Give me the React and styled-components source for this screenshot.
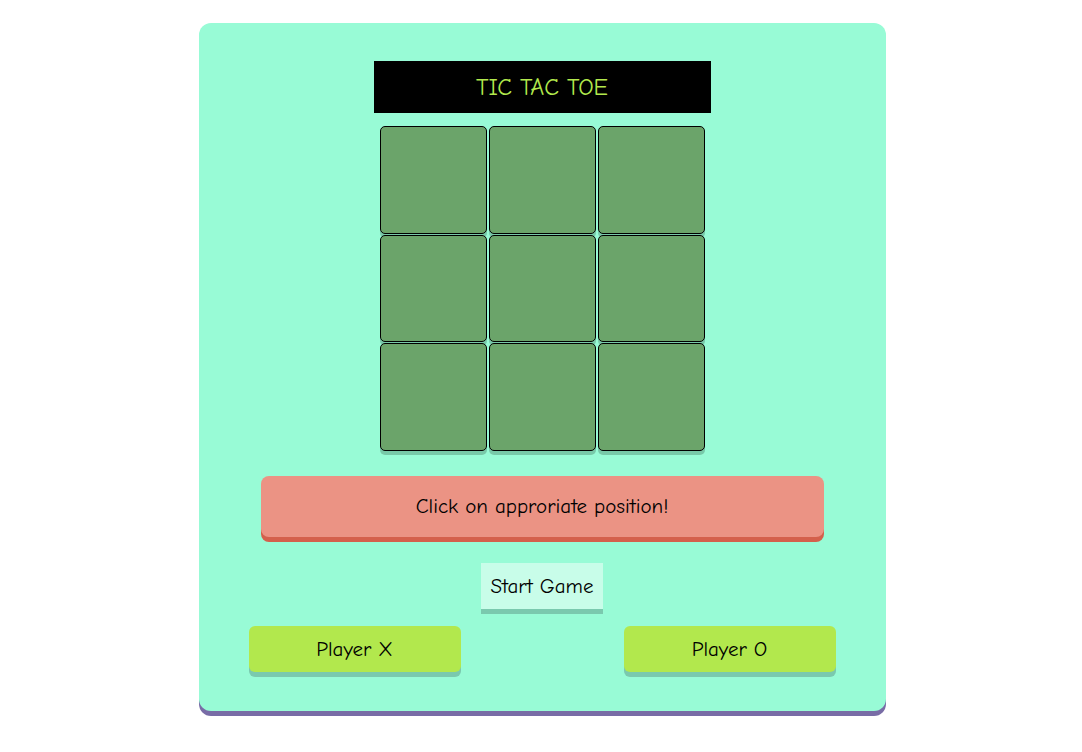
import React from "react";
import styled, { createGlobalStyle } from "styled-components";

const GlobalStyle = createGlobalStyle`
  body {
    margin: 0;
    background: #ffffff;
    font-family: "Comic Sans MS", "Comic Neue", cursive;
  }
`;

const Page = styled.div`
  display: flex;
  justify-content: center;
  align-items: flex-start;
  padding: 23px 0 36px 2px;
`;

const Card = styled.div`
  width: 687px;
  box-sizing: border-box;
  padding: 38px 50px 39px;
  background: #98fbd6;
  border-radius: 12px;
  box-shadow: 0 5px 0 #786ca6;
  display: flex;
  flex-direction: column;
  align-items: center;
`;

const Title = styled.div`
  width: 337px;
  height: 52px;
  background: #000000;
  color: #b2e84d;
  font-size: 24px;
  display: flex;
  align-items: center;
  justify-content: center;
`;

const Board = styled.div`
  margin-top: 13px;
  display: grid;
  grid-template-columns: repeat(3, 107px);
  grid-auto-rows: 107.5px;
  column-gap: 2px;
  row-gap: 1px;
`;

const Cell = styled.div`
  box-sizing: border-box;
  background: #6ba46a;
  border: 1px solid #000000;
  border-radius: 5px;
  box-shadow: 0 4px 0 #78c9a9;
`;

const Message = styled.div`
  margin-top: 25px;
  width: 563px;
  height: 61px;
  background: #eb9384;
  border-radius: 8px;
  box-shadow: 0 5px 0 #d4604c;
  display: flex;
  align-items: center;
  justify-content: center;
  font-size: 21px;
  color: #000000;
`;

const StartButton = styled.button`
  margin-top: 26px;
  height: 46px;
  padding: 0 10px;
  border: none;
  background: #c8fde9;
  box-shadow: 0 5px 0 #7ac9ae;
  font-family: inherit;
  font-size: 21px;
  color: #000000;
`;

const Players = styled.div`
  margin-top: 17px;
  align-self: stretch;
  display: flex;
  justify-content: space-between;
`;

const PlayerButton = styled.button`
  width: 212px;
  height: 46px;
  border: none;
  border-radius: 6px;
  background: #b2e84d;
  box-shadow: 0 5px 0 #7ac9ae;
  font-family: inherit;
  font-size: 21px;
  color: #000000;
`;

export default function App() {
  return (
    <>
      <GlobalStyle />
      <Page>
        <Card>
          <Title>TIC TAC TOE</Title>
          <Board>
            {[...Array(9).keys()].map((i) => (
              <Cell key={i} />
            ))}
          </Board>
          <Message>Click on approriate position!</Message>
          <StartButton>Start Game</StartButton>
          <Players>
            <PlayerButton>Player X</PlayerButton>
            <PlayerButton>Player O</PlayerButton>
          </Players>
        </Card>
      </Page>
    </>
  );
}
